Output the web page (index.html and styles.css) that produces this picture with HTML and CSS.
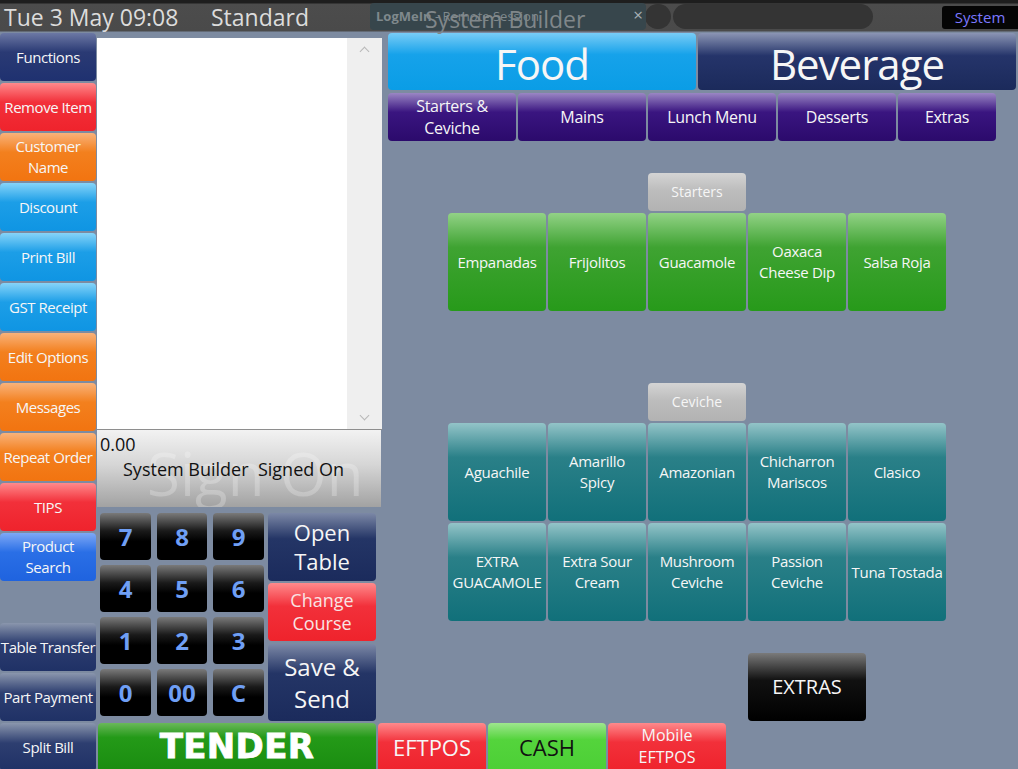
FILE: index.html
```html
<!DOCTYPE html>
<html>
<head>
<meta charset="utf-8">
<link rel="stylesheet" href="styles.css">
</head>
<body>
<div class="topbar">
  <span class="clock">Tue 3 May 09:08</span>
  <span class="mode">Standard</span>
  <span class="apptitle">System Builder</span>
  <span class="pill dot"></span>
  <span class="pill long"></span>
  <span class="sysbtn">System</span>
  <div class="lmi"><b>LogMeIn</b> - Remote Session<span class="lmi-x">×</span></div>
  <span class="apptitle-over">System Builder</span>
</div>

<div class="main">
  <div class="leftcol">
    <div class="btn side navy">Functions</div>
    <div class="btn side red">Remove Item</div>
    <div class="btn side orange">Customer<br>Name</div>
    <div class="btn side blue">Discount</div>
    <div class="btn side blue">Print Bill</div>
    <div class="btn side blue">GST Receipt</div>
    <div class="btn side orange">Edit Options</div>
    <div class="btn side orange">Messages</div>
    <div class="btn side orange">Repeat Order</div>
    <div class="btn side red">TIPS</div>
    <div class="btn side royal">Product<br>Search</div>
    <div class="side-spacer"></div>
    <div class="btn side navy2">Table Transfer</div>
    <div class="btn side navy2">Part Payment</div>
  </div>

  <div class="center">
    <div class="order">
      <div class="order-list"></div>
      <div class="order-scroll"><span class="chev up"></span><span class="chev down"></span></div>
    </div>
    <div class="signon">
      <span class="watermark">Sign On</span>
      <div class="total">0.00</div>
      <div class="signed">System Builder&nbsp;&nbsp;Signed On</div>
    </div>
    <div class="keys">
      <div class="numpad">
        <div class="key">7</div><div class="key">8</div><div class="key">9</div>
        <div class="key">4</div><div class="key">5</div><div class="key">6</div>
        <div class="key">1</div><div class="key">2</div><div class="key">3</div>
        <div class="key">0</div><div class="key">00</div><div class="key">C</div>
      </div>
      <div class="actions">
        <div class="btn act open navy3">Open<br>Table</div>
        <div class="btn act change red">Change<br>Course</div>
        <div class="btn act save navy3">Save &amp;<br>Send</div>
      </div>
    </div>
  </div>

  <div class="right">
    <div class="groups">
      <div class="btn group food">Food</div>
      <div class="btn group bev">Beverage</div>
    </div>
    <div class="cats">
      <div class="btn cat w128">Starters &amp;<br>Ceviche</div>
      <div class="btn cat w128">Mains</div>
      <div class="btn cat w128">Lunch Menu</div>
      <div class="btn cat w118">Desserts</div>
      <div class="btn cat w98">Extras</div>
    </div>
    <div class="items">
      <div class="btn head r1">Starters</div>
      <div class="btn item green r2">Empanadas</div>
      <div class="btn item green r2">Frijolitos</div>
      <div class="btn item green r2">Guacamole</div>
      <div class="btn item green r2">Oaxaca<br>Cheese Dip</div>
      <div class="btn item green r2">Salsa Roja</div>
      <div class="btn head r4">Ceviche</div>
      <div class="btn item teal r5">Aguachile</div>
      <div class="btn item teal r5">Amarillo<br>Spicy</div>
      <div class="btn item teal r5">Amazonian</div>
      <div class="btn item teal r5">Chicharron<br>Mariscos</div>
      <div class="btn item teal r5">Clasico</div>
      <div class="btn item teal r6">EXTRA<br>GUACAMOLE</div>
      <div class="btn item teal r6">Extra Sour<br>Cream</div>
      <div class="btn item teal r6">Mushroom<br>Ceviche</div>
      <div class="btn item teal r6">Passion<br>Ceviche</div>
      <div class="btn item teal r6">Tuna Tostada</div>
      <div class="btn extras r8">EXTRAS</div>
    </div>
  </div>
</div>

<div class="bottom">
  <div class="btn side navy2 split">Split Bill</div>
  <div class="btn tender">TENDER</div>
  <div class="btn pay eftpos red">EFTPOS</div>
  <div class="btn pay cash">CASH</div>
  <div class="btn pay mobile red">Mobile<br>EFTPOS</div>
</div>
</body>
</html>
```

FILE: styles.css
```css
* { box-sizing: border-box; }
html, body {
  margin: 0;
  padding: 0;
}
body {
  width: 1018px;
  height: 769px;
  overflow: hidden;
  background: #7d8ba1;
  font-family: "Open Sans", "Noto Sans", sans-serif;
  color: #f4f4f4;
  position: relative;
}

/* ---------- top bar ---------- */
.topbar {
  position: relative;
  height: 33px;
  display: flex;
  align-items: center;
  background: linear-gradient(180deg, #1e1e1e 0px, #1e1e1e 3px, #4c4c4c 4px, #4a4a4a 31px, #7d8ba1 32px);
  color: #dcdcdc;
}
.clock {
  width: 211px;
  padding-left: 4px;
  font-size: 23px;
  line-height: 36px;
  white-space: nowrap;
}
.mode {
  width: 214px;
  font-size: 23px;
  line-height: 36px;
}
.apptitle {
  width: 220px;
  font-size: 23px;
  color: transparent;
}
.pill {
  height: 25px;
  background: #343434;
  border-radius: 13px;
}
.pill.dot { width: 26px; }
.pill.long { width: 200px; margin-left: 2px; }
.sysbtn {
  margin-left: auto;
  width: 76px;
  height: 23px;
  background: #050505;
  border-radius: 3px 0 0 3px;
  color: #7b78ff;
  font-size: 15px;
  line-height: 23px;
  text-align: center;
  align-self: flex-start;
  margin-top: 6px;
}
.lmi {
  position: absolute;
  left: 370px;
  top: 3px;
  width: 276px;
  height: 27px;
  border-radius: 4px;
  background: #37464c;
  color: #7f898d;
  font-size: 13px;
  line-height: 27px;
  padding-left: 6px;
  white-space: nowrap;
}
.lmi b { font-weight: 700; }
.lmi-x {
  position: absolute;
  right: 3px;
  top: -2px;
  font-size: 17px;
  color: #a8b0b4;
}
.apptitle-over {
  position: absolute;
  left: 425px;
  top: 0;
  font-size: 23px;
  line-height: 38px;
  color: #80878a;
  white-space: nowrap;
}

/* ---------- generic button ---------- */
.btn {
  display: flex;
  align-items: center;
  justify-content: center;
  text-align: center;
  border-radius: 4px;
  color: #f6f6f6;
  line-height: 1.4;
}
.navy   { background: linear-gradient(180deg, #6c78a4 0%, #2a3a74 40%, #1f3170 100%); }
.navy2  { background: linear-gradient(180deg, #8a96ad 0%, #2d3e70 42%, #1f3166 100%); }
.navy3  { background: linear-gradient(180deg, #7c88a6 0%, #243566 38%, #1b2b5c 100%); }
.red    { background: linear-gradient(180deg, #ff8a8c 0%, #f2303a 40%, #ef232c 100%); }
.orange { background: linear-gradient(180deg, #f9b27a 0%, #f3801e 40%, #f27410 100%); }
.blue   { background: linear-gradient(180deg, #86d4f9 0%, #1c9ee7 40%, #0f95e3 100%); }
.royal  { background: linear-gradient(180deg, #7ea8f6 0%, #2a6fe6 40%, #1f63df 100%); }

/* ---------- main ---------- */
.main {
  display: flex;
  height: 690px;
}
.leftcol {
  width: 96px;
  display: flex;
  flex-direction: column;
  gap: 2px;
}
.side {
  height: 48px;
  flex: none;
  font-size: 15px;
  line-height: 21px;
  white-space: nowrap;
  letter-spacing: -0.45px;
}
.side-spacer { height: 38px; flex: none; }

.center {
  width: 285px;
  margin-left: 1px;
  display: flex;
  flex-direction: column;
}
.order {
  margin-top: 5px;
  height: 392px;
  display: flex;
  background: #ffffff;
  border-bottom: 1px solid #8e8e8e;
}
.order-list { flex: 1; }
.order-scroll {
  width: 35px;
  background: #efefef;
  display: flex;
  flex-direction: column;
  justify-content: space-between;
  align-items: center;
  padding: 6px 0 6px;
}
.chev {
  width: 7px;
  height: 7px;
  border-left: 1px solid #b8b8b8;
  border-top: 1px solid #b8b8b8;
}
.chev.up { transform: rotate(45deg); margin-top: 4px; }
.chev.down { transform: rotate(-135deg); margin-bottom: 4px; }

.signon {
  position: relative;
  height: 77px;
  width: 284px;
  background: linear-gradient(180deg, #f2f2f2 0%, #d6d6d6 45%, #a2a2a2 100%);
  color: #111;
  overflow: hidden;
}
.watermark {
  position: absolute;
  left: 50px;
  top: 8px;
  font-size: 60px;
  line-height: 70px;
  color: rgba(255, 255, 255, 0.24);
  white-space: nowrap;
}
.total {
  position: relative;
  padding-left: 3px;
  font-size: 18px;
  line-height: 28px;
}
.signed {
  position: relative;
  padding-left: 26px;
  font-size: 18px;
  line-height: 22px;
  white-space: nowrap;
}

.keys {
  margin-top: 6px;
  display: flex;
}
.numpad {
  margin-left: 3px;
  display: grid;
  grid-template-columns: 51px 50px 51px;
  grid-auto-rows: 47px;
  column-gap: 6px;
  row-gap: 5px;
}
.key {
  border-radius: 4px;
  background: linear-gradient(180deg, #7a7a7a 0%, #1a1a1a 38%, #000 60%, #000 100%);
  color: #6f9ff5;
  font-family: "Open Sans", sans-serif;
  font-weight: 700;
  font-size: 24px;
  display: flex;
  align-items: center;
  justify-content: center;
}
.actions {
  margin-left: 4px;
  width: 108px;
  display: flex;
  flex-direction: column;
}
.act { line-height: 1.3; }
.open { height: 68px; font-size: 22px; }
.change { height: 58px; margin-top: 2px; font-size: 18px; color: #f8e4e4; }
.save { height: 77px; margin-top: 3px; font-size: 24px; }

/* ---------- right ---------- */
.right {
  margin-left: 6px;
  width: 630px;
  display: flex;
  flex-direction: column;
}
.groups {
  display: flex;
  gap: 2px;
  height: 57px;
}
.group {
  font-size: 42px;
  line-height: 1;
  padding-top: 4px;
  letter-spacing: -1px;
}
.food {
  width: 308px;
  background: linear-gradient(180deg, #78ccf6 0%, #16a2ea 38%, #0a9de6 100%);
}
.bev {
  width: 318px;
  background: linear-gradient(180deg, #8b95b4 0%, #25346a 40%, #1b2a5b 100%);
}
.cats {
  margin-top: 3px;
  display: flex;
  gap: 2px;
  height: 48px;
}
.cat {
  font-size: 16px;
  line-height: 22px;
  letter-spacing: -0.3px;
  background: linear-gradient(180deg, #9a86c4 0%, #3a1580 40%, #2b0a6c 100%);
}
.w128 { width: 128px; }
.w118 { width: 118px; }
.w98 { width: 98px; }

.items {
  margin-top: 32px;
  margin-left: 60px;
  display: grid;
  grid-template-columns: repeat(5, 98px);
  grid-template-rows: 38px 98px 68px 38px 98px 98px 28px 68px;
  gap: 2px;
}
.r1 { grid-row: 1; grid-column: 3; }
.r2 { grid-row: 2; }
.r4 { grid-row: 4; grid-column: 3; }
.r5 { grid-row: 5; }
.r6 { grid-row: 6; }
.r8 { grid-row: 8; grid-column: 4; }
.head {
  font-size: 14px;
  background: linear-gradient(180deg, #d4d4d4 0%, #bdbdbd 45%, #b2b2b2 100%);
}
.item {
  font-size: 15px;
  line-height: 21px;
  white-space: nowrap;
  letter-spacing: -0.3px;
}
.green { background: linear-gradient(180deg, #92d286 0%, #3fa332 35%, #279a1a 100%); }
.teal  { background: linear-gradient(180deg, #93c4c8 0%, #2a8088 35%, #11707a 100%); }
.extras {
  width: 118px;
  font-size: 20px;
  background: linear-gradient(180deg, #7a7a7a 0%, #111 40%, #000 100%);
}

/* ---------- bottom row ---------- */
.bottom {
  display: flex;
  height: 46px;
  gap: 2px;
}
.split {
  width: 96px;
  height: 48px;
}
.tender {
  width: 278px;
  height: 48px;
  background: linear-gradient(180deg, #6ab85a 0%, #249a18 30%, #1a8c10 100%);
  font-family: "DejaVu Sans", sans-serif;
  font-weight: 700;
  font-size: 34px;
  color: #fff;
  -webkit-text-stroke: 0.8px #fff;
  letter-spacing: 0.3px;
  border-radius: 4px 4px 0 0;
}
.pay {
  height: 48px;
  border-radius: 4px 4px 0 0;
}
.eftpos { width: 108px; font-size: 22px; }
.cash {
  width: 118px;
  font-size: 22px;
  color: #111;
  background: linear-gradient(180deg, #9ee68e 0%, #54d43c 35%, #4ccf36 100%);
}
.mobile {
  width: 118px;
  font-size: 16px;
  line-height: 22px;
  align-items: flex-start;
  padding-top: 1px;
}
```
